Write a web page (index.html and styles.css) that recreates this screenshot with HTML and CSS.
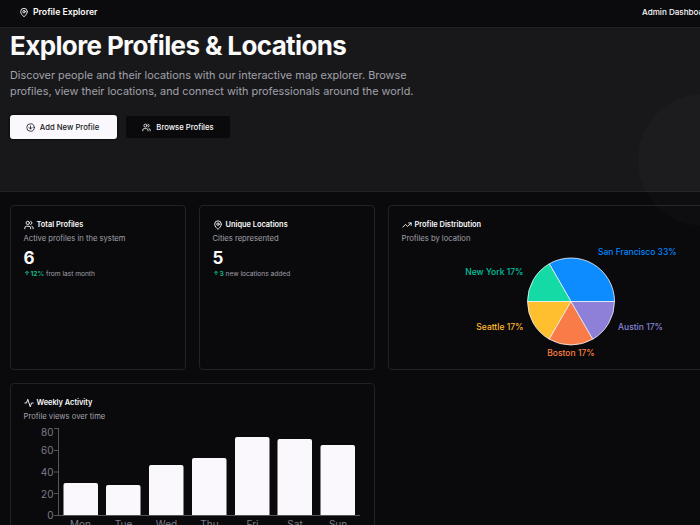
FILE: index.html
```html
<!DOCTYPE html>
<html lang="en">
<head>
<meta charset="utf-8">
<title>Profile Explorer</title>
<link rel="stylesheet" href="styles.css">
</head>
<body>
<div class="page">
  <header class="topbar">
    <div class="brand">
      <svg class="icon brand-icon" viewBox="0 0 24 24"><path d="M20 10c0 5-5.5 10.2-7.4 11.800a1 1 0 0 1-1.200 0C9.500 20.200 4 15 4 10a8 8 0 0 1 16 0"/><circle cx="12" cy="10" r="3"/></svg>
      <span>Profile Explorer</span>
    </div>
    <nav class="topnav">Admin Dashboard</nav>
  </header>

  <section class="hero">
    <h1>Explore Profiles &amp; Locations</h1>
    <p>Discover people and their locations with our interactive map explorer. Browse profiles, view their locations, and connect with professionals around the world.</p>
    <div class="actions">
      <a class="btn btn-light">
        <svg class="icon" viewBox="0 0 24 24"><circle cx="12" cy="12" r="10"/><path d="M12 8v8M8 12l4 4 4-4"/></svg>
        Add New Profile
      </a>
      <a class="btn btn-dark">
        <svg class="icon" viewBox="0 0 24 24"><path d="M16 21v-2a4 4 0 0 0-4-4H6a4 4 0 0 0-4 4v2"/><circle cx="9" cy="7" r="4"/><path d="M22 21v-2a4 4 0 0 0-3-3.870M16 3.130a4 4 0 0 1 0 7.750"/></svg>
        Browse Profiles
      </a>
    </div>
  </section>

  <main class="grid">
    <article class="card">
      <h2><svg class="icon" viewBox="0 0 24 24"><path d="M16 21v-2a4 4 0 0 0-4-4H6a4 4 0 0 0-4 4v2"/><circle cx="9" cy="7" r="4"/><path d="M22 21v-2a4 4 0 0 0-3-3.870M16 3.130a4 4 0 0 1 0 7.750"/></svg>Total Profiles</h2>
      <p class="sub">Active profiles in the system</p>
      <div class="num">6</div>
      <div class="note"><span class="up"><svg class="arrow" viewBox="0 0 24 24"><path d="M12 20V5M5 12l7-7 7 7"/></svg>12%</span> from last month</div>
    </article>
    <article class="card">
      <h2><svg class="icon" viewBox="0 0 24 24"><path d="M20 10c0 5-5.500 10.200-7.400 11.800a1 1 0 0 1-1.200 0C9.500 20.200 4 15 4 10a8 8 0 0 1 16 0"/><circle cx="12" cy="10" r="3"/></svg>Unique Locations</h2>
      <p class="sub">Cities represented</p>
      <div class="num">5</div>
      <div class="note"><span class="up"><svg class="arrow" viewBox="0 0 24 24"><path d="M12 20V5M5 12l7-7 7 7"/></svg>3</span> new locations added</div>
    </article>
    <article class="card wide">
      <h2><svg class="icon" viewBox="0 0 24 24"><path d="M22 7l-8.500 8.500-5-5L2 17M16 7h6v6"/></svg>Profile Distribution</h2>
      <p class="sub">Profiles by location</p>
      <svg class="pie" viewBox="0 0 340 120" width="340" height="120">
        <g stroke="#f4f4f8" stroke-width="0.8">
          <path fill="#0d8cff" d="M170 65.500L213.500 65.500A43.500 43.500 0 0 0 148.250 27.830Z"/>
          <path fill="#14dba5" d="M170 65.500L148.250 27.830A43.500 43.500 0 0 0 126.500 65.500Z"/>
          <path fill="#ffbf2e" d="M170 65.500L126.500 65.500A43.500 43.500 0 0 0 148.250 103.170Z"/>
          <path fill="#f97b48" d="M170 65.500L148.250 103.170A43.500 43.500 0 0 0 191.750 103.170Z"/>
          <path fill="#8e80d9" d="M170 65.500L191.750 103.170A43.500 43.500 0 0 0 213.500 65.500Z"/>
        </g>
        <g class="pie-label">
          <text x="197" y="19" fill="#0088fe">San Francisco 33%</text>
          <text x="122.500" y="39" fill="#00c49f" text-anchor="end">New York 17%</text>
          <text x="122.500" y="93.500" fill="#ffbb28" text-anchor="end">Seattle 17%</text>
          <text x="170" y="120" fill="#ff8042" text-anchor="middle">Boston 17%</text>
          <text x="217" y="93.500" fill="#8884d8">Austin 17%</text>
        </g>
      </svg>
    </article>
    <article class="card wide activity">
      <h2><svg class="icon" viewBox="0 0 24 24"><path d="M22 12h-4l-3 9L9 3l-3 9H2"/></svg>Weekly Activity</h2>
      <p class="sub">Profile views over time</p>
      <svg class="bars" viewBox="0 0 340 110" width="340" height="110">
        <g class="axis-text" text-anchor="end">
          <text x="29.500" y="9">80</text>
          <text x="29.500" y="27">60</text>
          <text x="29.500" y="48.500">40</text>
          <text x="29.500" y="70.500">20</text>
          <text x="29.500" y="92">0</text>
        </g>
        <path class="axis" d="M34.500 1.500V88.500H336M30 1.500H35M30 23.500H35M30 45H35M30 66.500H35M30 88.500H35"/>
        <g fill="#faf8fd">
          <path d="M39.500 88V58a2 2 0 0 1 2-2h30.500a2 2 0 0 1 2 2v30Z"/>
          <path d="M82 88V60a2 2 0 0 1 2-2h30.500a2 2 0 0 1 2 2v28Z"/>
          <path d="M125 88V40a2 2 0 0 1 2-2h30.500a2 2 0 0 1 2 2v48Z"/>
          <path d="M168 88V33a2 2 0 0 1 2-2h30.500a2 2 0 0 1 2 2v55Z"/>
          <path d="M211 88V12a2 2 0 0 1 2-2h30.500a2 2 0 0 1 2 2v76Z"/>
          <path d="M253.500 88V14a2 2 0 0 1 2-2h30.500a2 2 0 0 1 2 2v74Z"/>
          <path d="M296.500 88V20a2 2 0 0 1 2-2h30.500a2 2 0 0 1 2 2v68Z"/>
        </g>
        <g class="axis-text" text-anchor="middle">
          <text x="56.500" y="100.500">Mon</text>
          <text x="99.500" y="100.500">Tue</text>
          <text x="142.500" y="100.500">Wed</text>
          <text x="185.500" y="100.500">Thu</text>
          <text x="228.500" y="100.500">Fri</text>
          <text x="271" y="100.500">Sat</text>
          <text x="314" y="100.500">Sun</text>
        </g>
      </svg>
    </article>
  </main>
  <div class="hero-circle"></div>
</div>
</body>
</html>
```

FILE: styles.css
```css
* { box-sizing: border-box; }
html, body {
  margin: 0;
  height: 525px;
  overflow: hidden;
  background: #0a0a0d;
}
body {
  font-family: Inter, "Liberation Sans", sans-serif;
  color: #fafafa;
}
.page {
  width: 763px;
  position: relative;
  overflow: hidden;
}
.icon {
  width: 10px;
  height: 10px;
  fill: none;
  stroke: currentColor;
  stroke-width: 2.200;
  stroke-linecap: round;
  stroke-linejoin: round;
  flex: none;
}
.topbar {
  height: 28px;
  display: flex;
  align-items: center;
  justify-content: space-between;
  padding: 0 11px 3px 19px;
  background: #0b0b0e;
  border-bottom: 1px solid #222226;
}
.brand {
  display: flex;
  align-items: center;
  gap: 4px;
  font-size: 8.700px;
  font-weight: 600;
}
.brand-icon {
  width: 10px;
  height: 11px;
}
.topnav {
  font-size: 8.100px;
  font-weight: 500;
  width: 110px;
  white-space: nowrap;
}
.hero {
  height: 164px;
  padding: 0 10px;
  background: #18181b;
  border-bottom: 1px solid #222226;
}
.hero-circle {
  position: absolute;
  left: 638px;
  top: 94px;
  width: 132px;
  height: 132px;
  border-radius: 50%;
  background: rgba(255, 255, 255, 0.018);
  pointer-events: none;
}
.hero h1 {
  margin: 0;
  padding-top: 1px;
  font-size: 26px;
  line-height: 34px;
  font-weight: 700;
  letter-spacing: -0.620px;
}
.hero p {
  margin: 5px 0 0;
  width: 410px;
  font-size: 10.870px;
  line-height: 15.500px;
  color: #a1a1aa;
}
.actions {
  display: flex;
  gap: 8px;
  margin-top: 16px;
}
.btn {
  display: flex;
  align-items: center;
  justify-content: center;
  gap: 5px;
  height: 24px;
  font-size: 7.700px;
  font-weight: 500;
  border-radius: 3px;
}
.btn .icon {
  width: 9px;
  height: 9px;
}
.btn-light {
  width: 107px;
  padding-right: 2px;
  background: #faf8fd;
  color: #18181b;
  box-shadow: 0 0 3px #000;
}
.btn-dark {
  width: 106px;
  background: #0a0a0d;
  border: 1px solid #18181b;
  color: #fafafa;
}
.grid {
  display: grid;
  grid-template-columns: repeat(4, 176px);
  grid-template-rows: 164.500px 200px;
  gap: 13px;
  padding: 13px 10px;
}
.card {
  background: #0a0a0d;
  border: 1px solid #222226;
  border-radius: 4px;
  padding: 13px 12.500px;
}
.wide {
  grid-column: span 2;
}
.activity {
  grid-column: 1 / span 2;
}
.card h2 {
  display: flex;
  align-items: center;
  gap: 3px;
  margin: 0;
  font-size: 7.400px;
  line-height: 12px;
  font-weight: 600;
  color: #fafafa;
}
.sub {
  margin: 2px 0 0;
  font-size: 7.650px;
  line-height: 12px;
  color: #a1a1aa;
}
.num {
  margin-top: 3px;
  font-size: 17px;
  line-height: 20px;
  font-weight: 700;
}
.note {
  margin-top: 1px;
  font-size: 6.600px;
  line-height: 10px;
  color: #a1a1aa;
}
.up {
  color: #10b981;
  font-weight: 700;
}
.arrow {
  width: 6px;
  height: 6px;
  margin-right: 1px;
  fill: none;
  stroke: currentColor;
  stroke-width: 4;
}
.pie, .bars {
  display: block;
  overflow: visible;
}
.pie-label {
  font-size: 8.500px;
  font-weight: 500;
}
.pie {
  margin: -9px 0 0 -0.500px;
}
.bars {
  margin-top: 4px;
}
.axis {
  fill: none;
  stroke: #55555b;
  stroke-width: 1;
}
.axis-text {
  font-size: 10px;
  fill: #7c7c84;
}
```
